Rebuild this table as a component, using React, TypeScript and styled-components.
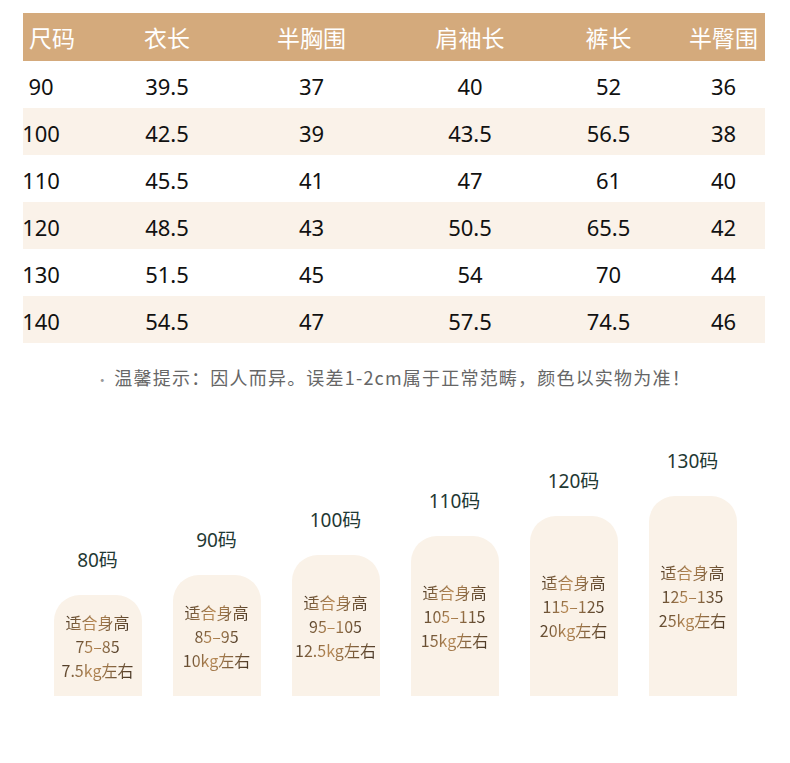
import styled, { createGlobalStyle } from "styled-components";

const GlobalStyle = createGlobalStyle`
  body {
    margin: 0;
    background: #ffffff;
    font-family: "Noto Sans", "Noto Sans CJK SC", sans-serif;
  }
`;

const Page = styled.div`
  width: 790px;
  padding-top: 13px;
`;

const Table = styled.div`
  width: 742px;
  margin-left: 23px;
  display: grid;
  grid-template-columns: 93px 102px 187px 130px 147px 83px;
`;

const HeadCell = styled.div<{ $first?: boolean }>`
  height: 48px;
  background: #d4aa7c;
  color: #ffffff;
  font-family: "Noto Sans CJK SC", sans-serif;
  font-size: 23px;
  display: flex;
  align-items: center;
  justify-content: ${(p) => (p.$first ? "flex-start" : "center")};
  padding-left: ${(p) => (p.$first ? "6px" : "0")};
`;

const Cell = styled.div<{ $striped: boolean; $first?: boolean }>`
  height: 47px;
  background: ${(p) => (p.$striped ? "#faf2e9" : "#ffffff")};
  color: #111111;
  font-family: "Noto Sans", sans-serif;
  font-size: 22px;
  display: flex;
  align-items: center;
  justify-content: center;
  padding-right: ${(p) => (p.$first ? "57px" : "0")};
  padding-top: 2px;
  box-sizing: border-box;
`;

const Note = styled.p`
  margin: 22px 0 0;
  height: 24px;
  text-align: center;
  font-family: "Noto Sans CJK SC", sans-serif;
  font-size: 18px;
  letter-spacing: 1.2px;
  line-height: 24px;
  color: #666666;
  padding-right: 4px;
`;

const Bullet = styled.span`
  color: #999999;
  font-size: 14px;
  margin-right: 4px;
`;

const Bars = styled.div`
  margin-top: 60px;
  display: flex;
  justify-content: center;
  align-items: flex-end;
  gap: 31px;
`;

const Column = styled.div`
  display: flex;
  flex-direction: column;
  align-items: center;
  width: 88px;
`;

const SizeLabel = styled.div`
  font-family: "Noto Sans", "Noto Sans CJK SC", sans-serif;
  font-size: 19px;
  line-height: 24px;
  color: #1f3934;
  margin-bottom: 23px;
`;

const Bar = styled.div<{ $height: number }>`
  width: 88px;
  height: ${(p) => p.$height}px;
  background: #faf2e8;
  border-radius: 26px 26px 0 0;
  display: flex;
  flex-direction: column;
  align-items: center;
  justify-content: center;
`;

const BarLine = styled.div`
  font-family: "Noto Sans CJK SC", sans-serif;
  font-size: 16px;
  line-height: 24px;
  white-space: nowrap;
  background: linear-gradient(120deg, #3a2c1e 0%, #b98a55 45%, #3a2c1e 100%);
  -webkit-background-clip: text;
  background-clip: text;
  color: transparent;
`;

const headers = ["尺码", "衣长", "半胸围", "肩袖长", "裤长", "半臀围"];

const rows = [
  ["90", "39.5", "37", "40", "52", "36"],
  ["100", "42.5", "39", "43.5", "56.5", "38"],
  ["110", "45.5", "41", "47", "61", "40"],
  ["120", "48.5", "43", "50.5", "65.5", "42"],
  ["130", "51.5", "45", "54", "70", "44"],
  ["140", "54.5", "47", "57.5", "74.5", "46"],
];

const sizes = [
  { size: "80码", range: "75–85", weight: "7.5kg左右", height: 101 },
  { size: "90码", range: "85–95", weight: "10kg左右", height: 121 },
  { size: "100码", range: "95–105", weight: "12.5kg左右", height: 141 },
  { size: "110码", range: "105–115", weight: "15kg左右", height: 160 },
  { size: "120码", range: "115–125", weight: "20kg左右", height: 180 },
  { size: "130码", range: "125–135", weight: "25kg左右", height: 200 },
];

export default function App() {
  return (
    <Page>
      <GlobalStyle />
      <Table>
        {headers.map((h, i) => (
          <HeadCell key={h} $first={i === 0}>
            {h}
          </HeadCell>
        ))}
        {rows.map((row, r) =>
          row.map((v, c) => (
            <Cell key={`${r}-${c}`} $striped={r % 2 === 1} $first={c === 0}>
              {v}
            </Cell>
          ))
        )}
      </Table>
      <Note>
        <Bullet>•</Bullet>温馨提示：因人而异。误差1-2cm属于正常范畴，颜色以实物为准！
      </Note>
      <Bars>
        {sizes.map((s) => (
          <Column key={s.size}>
            <SizeLabel>{s.size}</SizeLabel>
            <Bar $height={s.height}>
              <BarLine>适合身高</BarLine>
              <BarLine>{s.range}</BarLine>
              <BarLine>{s.weight}</BarLine>
            </Bar>
          </Column>
        ))}
      </Bars>
    </Page>
  );
}
